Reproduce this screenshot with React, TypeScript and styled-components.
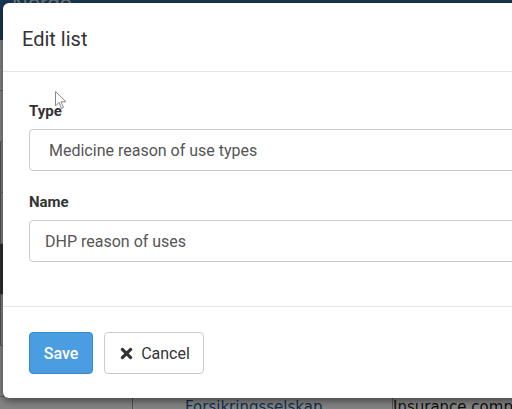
import React from "react";
import styled, { createGlobalStyle } from "styled-components";
import { FaTimes } from "react-icons/fa";

const Global = createGlobalStyle`
  html, body { margin: 0; padding: 0; }
  body { font-family: Roboto, "Liberation Sans", sans-serif; width: 512px; height: 409px; overflow: hidden; background: #fff; }
`;

const Page = styled.div`
  position: relative;
  width: 512px;
  height: 409px;
  overflow: hidden;
  background: #f2f2f2;
  display: flex;
  flex-direction: column;
`;

const TopBar = styled.div`
  height: 40px;
  flex-shrink: 0;
  background: #2c6496;
  color: #cfe0f0;
  font-family: "Liberation Sans", sans-serif;
  font-size: 22px;
  padding: 0 12px;
  display: flex;
  align-items: flex-start;
  line-height: 8px;
`;

const Table = styled.div`
  display: flex;
  flex-direction: column;
`;

const Row = styled.div<{ $dark?: boolean }>`
  height: 50px;
  flex-shrink: 0;
  border-bottom: 1px solid #bbb;
  background: ${(p) => (p.$dark ? "#555" : "#f4f4f4")};
  display: grid;
  grid-template-columns: 132px 260px 1fr;
  font-family: "DejaVu Sans", sans-serif;
  font-size: 15px;
`;

const Cell = styled.div<{ $link?: boolean; $indent?: number }>`
  color: ${(p) => (p.$link ? "#1e5a94" : "#222")};
  padding: 3px 0 0 ${(p) => p.$indent ?? 52}px;
  border-left: 1px solid #999;
  line-height: 14px;
  white-space: nowrap;
`;

const Overlay = styled.div`
  position: absolute;
  inset: 0;
  background: rgba(0, 0, 0, 0.45);
`;

const Modal = styled.div`
  position: absolute;
  left: 3px;
  top: 3px;
  width: 580px;
  height: 395px;
  background: #fff;
  border-radius: 6px;
  box-shadow: 0 3px 9px rgba(0, 0, 0, 0.5);
  display: flex;
  flex-direction: column;
  color: #333;
`;

const Header = styled.div`
  height: 69px;
  border-bottom: 1px solid #e5e5e5;
  padding: 3px 19px 0;
  display: flex;
  align-items: center;
  box-sizing: border-box;
`;

const Title = styled.h4`
  margin: 0;
  font-size: 20px;
  font-weight: 400;
  color: #333;
`;

const Body = styled.div`
  height: 234px;
  box-sizing: border-box;
  padding: 29px 0 0 26px;
  display: flex;
  flex-direction: column;
`;

const Group = styled.div`
  display: flex;
  flex-direction: column;
  margin-bottom: 21px;
`;

const Label = styled.label`
  font-size: 15px;
  font-weight: 700;
  color: #333;
  line-height: 20px;
  margin-bottom: 8px;
`;

const Field = styled.div<{ $pad: number }>`
  height: 42px;
  box-sizing: border-box;
  border: 1px solid #ccc;
  border-radius: 4px;
  padding-left: ${(p) => p.$pad}px;
  display: flex;
  align-items: center;
  font-size: 16px;
  color: #555;
`;

const Footer = styled.div`
  flex: 1;
  border-top: 1px solid #e5e5e5;
  padding: 25px 26px 0;
  display: flex;
  gap: 11px;
  align-items: flex-start;
`;

const Button = styled.button<{ $primary?: boolean }>`
  height: 42px;
  box-sizing: border-box;
  border-radius: 4px;
  font-family: Roboto, "Liberation Sans", sans-serif;
  font-size: 16px;
  display: inline-flex;
  align-items: center;
  justify-content: center;
  gap: 6px;
  cursor: pointer;
  border: 1px solid ${(p) => (p.$primary ? "#3a88cc" : "#ccc")};
  background: ${(p) => (p.$primary ? "#4a9de1" : "#fff")};
  color: ${(p) => (p.$primary ? "#fff" : "#333")};
  font-weight: ${(p) => (p.$primary ? 500 : 400)};
  width: ${(p) => (p.$primary ? "64px" : "100px")};
  padding: 0;
`;

const Cursor = styled.svg`
  position: absolute;
  left: 55px;
  top: 91px;
`;

export default function App() {
  return (
    <>
      <Global />
      <Page>
        <TopBar>Norde</TopBar>
        <Table>
          <Row />
          <Row />
          <Row><Cell $link>n</Cell></Row>
          <Row><Cell $link>a</Cell></Row>
          <Row $dark />
          <Row><Cell $link>d</Cell></Row>
          <Row />
          <Row>
            <div />
            <Cell $link>Forsikringsselskap</Cell>
            <Cell $indent={0}>Insurance company</Cell>
          </Row>
        </Table>
        <Overlay />
        <Modal>
          <Header>
            <Title>Edit list</Title>
          </Header>
          <Body>
            <Group>
              <Label>Type</Label>
              <Field $pad={19}>Medicine reason of use types</Field>
            </Group>
            <Group>
              <Label>Name</Label>
              <Field $pad={15}>DHP reason of uses</Field>
            </Group>
          </Body>
          <Footer>
            <Button $primary>Save</Button>
            <Button>
              <FaTimes size={17} />
              Cancel
            </Button>
          </Footer>
        </Modal>
        <Cursor width="12" height="19" viewBox="0 0 12 19">
          <path d="M0.5 0.5 L0.5 15 L4 11.5 L6.5 17.5 L8.5 16.5 L6 10.8 L11 10.8 Z" fill="#fff" stroke="#888" strokeWidth="1" />
        </Cursor>
      </Page>
    </>
  );
}
